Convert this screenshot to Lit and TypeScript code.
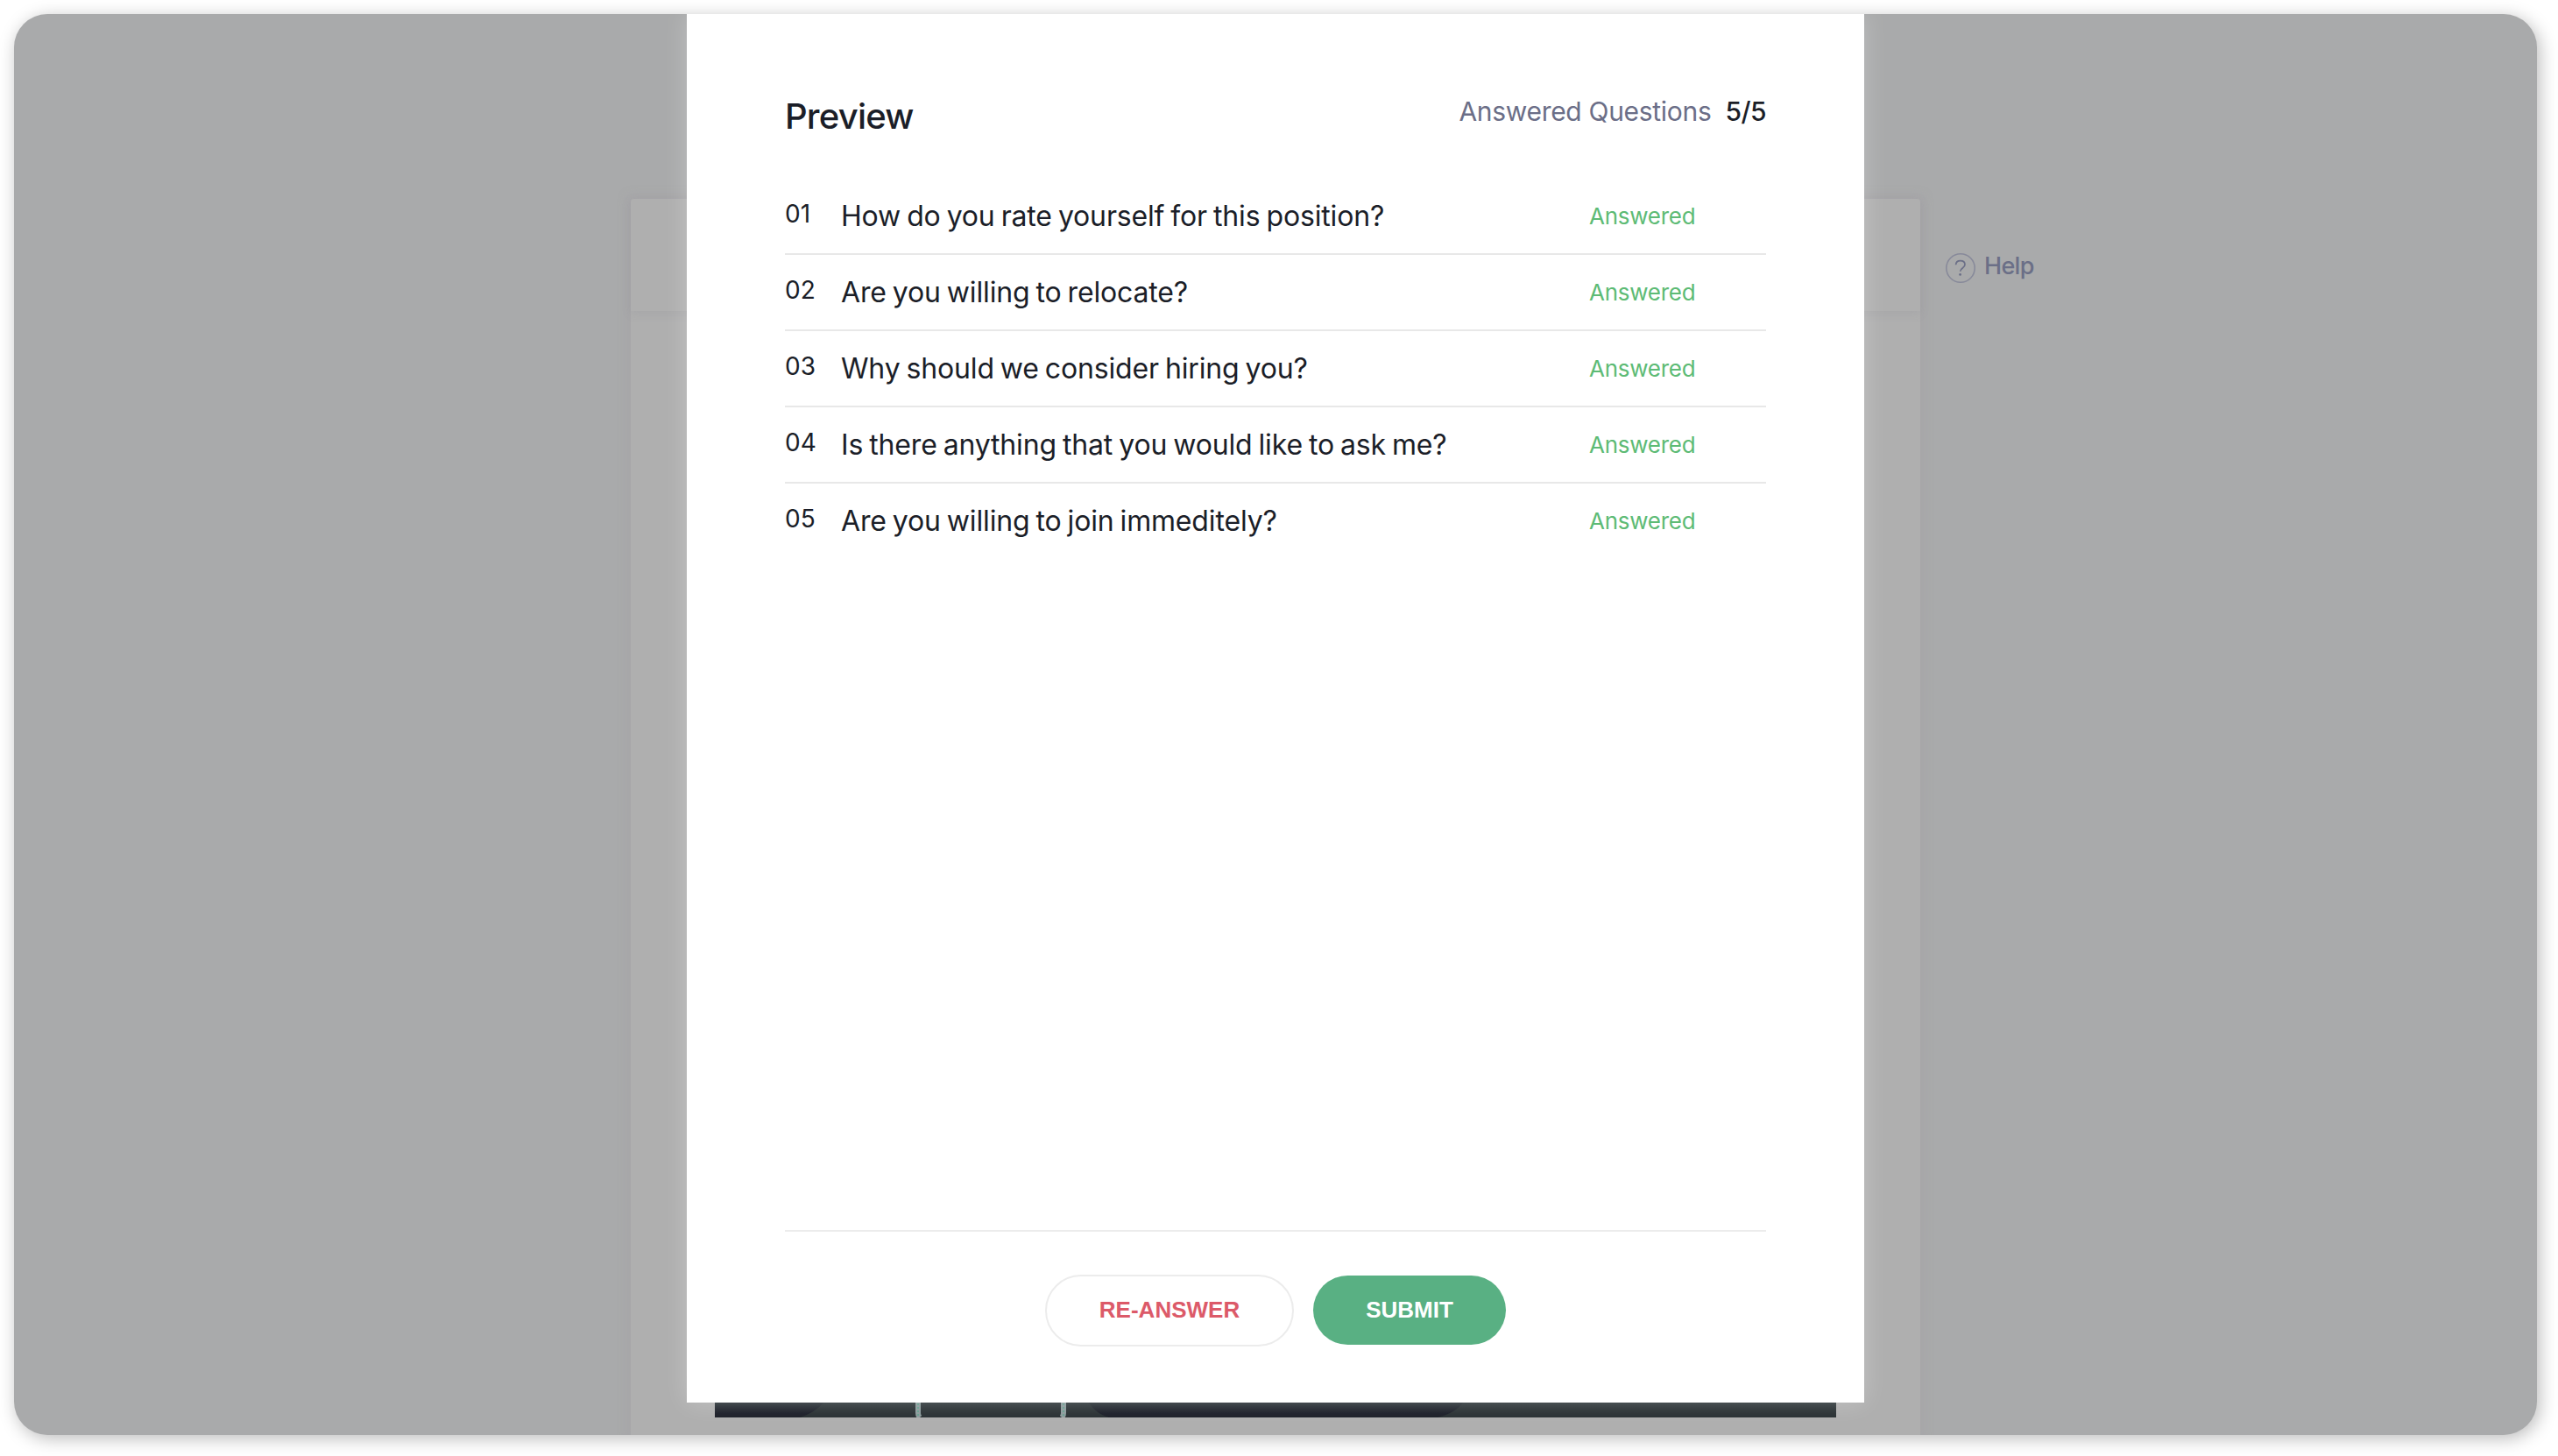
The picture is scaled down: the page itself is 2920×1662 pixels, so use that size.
import { LitElement, html, css, svg } from 'lit';
import { customElement, property } from 'lit/decorators.js';

const QUESTIONS = [
  'How do you rate yourself for this position?',
  'Are you willing to relocate?',
  'Why should we consider hiring you?',
  'Is there anything that you would like to ask me?',
  'Are you willing to join immeditely?',
];

const helpIcon = svg`
  <circle cx="18" cy="18" r="16.2" fill="none" stroke="#888a9a" stroke-width="1.6" />
  <path d="M12.6 14.2c.2-3.1 2.3-4.6 5.1-4.6 3 0 5.3 1.6 5.3 4.5 0 3.9-5.3 3.9-5.3 7.7" fill="none" stroke="#6b6f87" stroke-width="1.7" />
  <circle cx="17.6" cy="25.4" r="1.4" fill="#6b6f87" />
`;

// Lower edge of the recorder, the only part the modal leaves uncovered
const videoStrip = svg`
  <defs>
    <linearGradient id="fade" x1="0" y1="0" x2="0" y2="1">
      <stop offset="0" stop-color="#303a3c" stop-opacity="0.7" />
      <stop offset="0.7" stop-color="#2b3336" stop-opacity="0" />
    </linearGradient>
  </defs>
  <rect width="1280" height="40" fill="#191c26" />
  <path d="M97 40C108 36 116 32 124 23H427C433 32 440 37 450 40Z" fill="#272e31" />
  <path d="M825 40C840 36 848 31 854 23H1280V40Z" fill="#272e31" />
  <rect y="23" width="1280" height="17" fill="url(#fade)" />
  <path d="M232 23V35Q232 38 234 40M398 23V35Q398 38 396 40" fill="none" stroke="#8b9a9b" stroke-width="6" />
  <path d="M232 24V38M398 24V38" fill="none" stroke="#5aa08a" stroke-width="1.5" stroke-dasharray="2 2" />
`;

@customElement('question-row')
export class QuestionRow extends LitElement {
  @property({ type: Number }) index = 0;
  @property() text = '';

  static styles = css`
    :host {
      display: grid;
      grid-template-columns: 64px 1fr 202px;
      height: 85px;
      border-bottom: 2px solid #e8e8e8;
      color: #1b1e28;
      white-space: nowrap;
    }
    :host(:last-child) { border-bottom-color: transparent; }

    .number {
      font-size: 28px;
      line-height: 34px;
      padding-top: 23px;
    }
    .text {
      font-size: 32px;
      line-height: 40px;
      padding-top: 23px;
      letter-spacing: -0.16px;
      word-spacing: -1.8px;
    }
    .status {
      font-size: 26px;
      line-height: 32px;
      padding-top: 27px;
      color: #5dbb75;
      letter-spacing: -0.01em;
    }
  `;

  render() {
    return html`
      <span class="number">${String(this.index).padStart(2, '0')}</span>
      <span class="text">${this.text}</span>
      <span class="status">Answered</span>
    `;
  }
}

@customElement('app-root')
export class AppRoot extends LitElement {
  static styles = css`
    :host {
      display: block;
      box-sizing: border-box;
      width: 2920px;
      height: 1662px;
      padding: 16px 24px 24px 16px;
      background: #fff;
      font-family: Inter, 'Open Sans', sans-serif;
      overflow: hidden;
    }

    .window {
      position: relative;
      height: 1622px;
      border-radius: 38px;
      background: #a9aaab;
      box-shadow: 3px 4px 20px rgba(0, 0, 0, 0.27);
    }

    /* clips everything to the rounded window */
    .clip {
      height: 100%;
      border-radius: 38px;
      overflow: hidden;
    }

    /* === Dimmed page behind the modal === */
    .page {
      display: grid;
      grid-template-columns: 1472px auto;
      justify-content: start;
      column-gap: 28px;
      height: 1411px;
      padding: 211px 0 0 704px;
    }
    .panel {
      display: flex;
      flex-direction: column;
      justify-content: space-between;
      align-items: center;
      border-radius: 4px 4px 0 0;
      background: #afafaf;
      box-shadow: 0 0 10px 5px rgba(166, 164, 168, 0.5);
    }
    .panel-head {
      width: 100%;
      height: 128px;
      box-shadow: 0 3px 10px rgba(120, 124, 132, 0.15);
    }
    .video {
      display: block;
      margin-bottom: 20px;
    }
    .help {
      display: flex;
      gap: 9px;
      height: 36px;
      margin-top: 61px;
      color: #6b6f87;
      font-size: 27px;
      font-weight: 500;
      line-height: 32px;
      letter-spacing: -0.025em;
    }

    /* === Modal === */
    .modal {
      position: absolute;
      top: 0;
      left: 768px;
      box-sizing: border-box;
      display: flex;
      flex-direction: column;
      width: 1344px;
      height: 1585px;
      padding: 0 112px;
      background: #fff;
      box-shadow: 0 0 26px rgba(255, 255, 255, 0.26);
      clip-path: inset(0 -60px -60px -60px);
    }
    .head {
      display: flex;
      justify-content: space-between;
      height: 188px;
      white-space: nowrap;
    }
    .title {
      margin: 0;
      padding-top: 92px;
      color: #1b1e28;
      font-size: 40px;
      font-weight: 500;
      line-height: 50px;
      letter-spacing: -0.02em;
    }
    .count {
      padding-top: 93px;
      color: #6b6e87;
      font-size: 30px;
      line-height: 36px;
      letter-spacing: -0.01em;
    }
    .count b {
      margin-left: 8px;
      color: #1b1e28;
      font-weight: 500;
      letter-spacing: -0.02em;
    }
    .list { flex: 1; }
    .actions {
      box-sizing: border-box;
      display: flex;
      justify-content: center;
      align-items: center;
      gap: 22px;
      height: 197px;
      padding-bottom: 16px;
      border-top: 2px solid #ececec;
    }
    button {
      box-sizing: border-box;
      padding: 0;
      border: 0;
      border-radius: 41px;
      font: bold 26px 'Liberation Sans', Arial, sans-serif;
    }
    .again {
      width: 284px;
      height: 82px;
      border: 2px solid #ececec;
      background: #fff;
      color: #dc5a69;
    }
    .submit {
      width: 220px;
      height: 79px;
      background: #59b083;
      color: #fff;
    }
  `;

  render() {
    return html`
      <div class="window">
        <div class="clip">
          <div class="page">
            <div class="panel">
              <div class="panel-head"></div>
              <svg class="video" width="1280" height="40" viewBox="0 0 1280 40">${videoStrip}</svg>
            </div>
            <div class="help">
              <svg width="36" height="36" viewBox="0 0 36 36">${helpIcon}</svg>
              <span>Help</span>
            </div>
          </div>
        </div>
        <div class="modal">
          <div class="head">
            <h1 class="title">Preview</h1>
            <div class="count">Answered Questions <b>5/5</b></div>
          </div>
          <div class="list">
            ${QUESTIONS.map((text, i) => html`
              <question-row .index=${i + 1} .text=${text}></question-row>
            `)}
          </div>
          <div class="actions">
            <button class="again">RE-ANSWER</button>
            <button class="submit">SUBMIT</button>
          </div>
        </div>
      </div>
    `;
  }
}

declare global {
  interface HTMLElementTagNameMap {
    'app-root': AppRoot;
    'question-row': QuestionRow;
  }
}
